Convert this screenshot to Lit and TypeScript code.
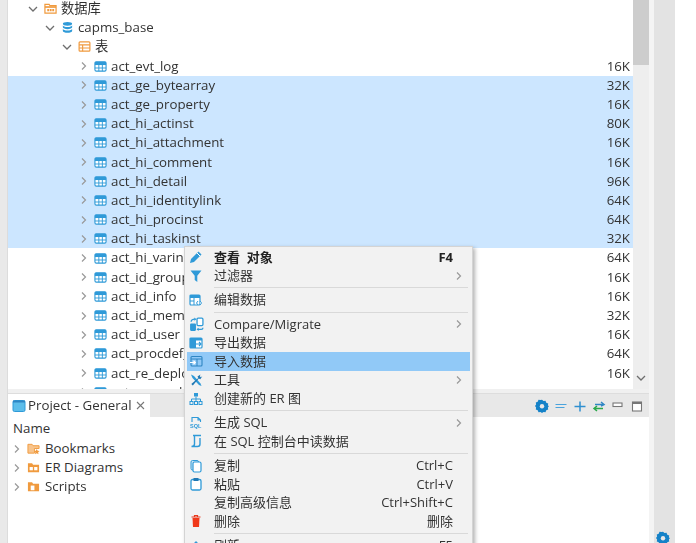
import { LitElement, html, css, svg } from "lit";
import { customElement } from "lit/decorators.js";

const B = "#2f9ad8";
const O = "#f09a3e";
const wrap = (c: unknown, size = 13) => html`<svg class="ic" width=${size} height=${size} viewBox="0 0 14 14" fill="none">${c}</svg>`;
const chevR = html`<svg class="chev" width="8" height="10" viewBox="0 0 8 10" fill="none"><path d="M2 1.500l3.500 3.500-3.500 3.500" stroke="#999" stroke-width="1.200"/></svg>`;
const chevD = html`<svg class="chev" width="10" height="8" viewBox="0 0 10 8" fill="none"><path d="M1 2l4 4 4-4" stroke="#6e6e6e" stroke-width="1.300"/></svg>`;
const closeX = html`<svg class="close" width="9" height="9" viewBox="0 0 9 9" fill="none"><path d="M1 1l7 7M8 1L1 8" stroke="#777" stroke-width="1.100"/></svg>`;

const icons: Record<string, unknown> = {
  table: wrap(svg`<rect x="1" y="2" width="12" height="10" rx="1.500" fill="#fff" stroke="${B}" stroke-width="1.200"/><rect x="1" y="2" width="12" height="3.400" fill="${B}"/><path d="M1 8.600h12M5.200 5v7M9 5v7" stroke="${B}"/>`),
  dbfolder: wrap(svg`<path d="M1 2.500h4.500l1 1.500H13v8H1z" fill="#fff" stroke="${O}" stroke-width="1.300"/><path d="M1 4.500h12v1.800H1z" fill="${O}"/><path d="M3.500 7.500h2v2.500h-2zM6.200 7.500h2v2.500h-2zM8.900 7.500h2v2.500h-2z" fill="${O}"/>`),
  db: wrap(svg`<ellipse cx="7" cy="3" rx="5" ry="2" fill="${B}"/><path d="M2 4.600c0 2.600 10 2.600 10 0v2.200c0 2.600-10 2.600-10 0zM2 8.400c0 2.600 10 2.600 10 0v2.400c0 2.600-10 2.600-10 0z" fill="${B}"/>`),
  tables: wrap(svg`<rect x="1.200" y="2" width="11.600" height="10" rx="1" fill="#fff" stroke="${O}" stroke-width="1.300"/><path d="M1.200 5.200h11.600M1.200 8.600h11.600M5 5v7" stroke="${O}" stroke-width="1.200"/>`),
  pencil: wrap(svg`<path d="M9.500 1.500l3 3-7.500 7.500-4 1 1-4z" fill="${B}"/><path d="M8 3l3 3" stroke="#fff"/>`, 14),
  filter: wrap(svg`<path d="M1.500 1.500h11L8.300 6.800V13L5.700 11V6.800z" fill="${B}"/>`, 14),
  edit: wrap(svg`<rect x="1" y="2" width="10" height="10" rx="1" fill="#fff" stroke="${B}" stroke-width="1.200"/><rect x="1" y="2" width="10" height="3" fill="${B}"/><path d="M1 8h4M5 5v7" stroke="${B}"/><path d="M9 8l-1.500 2L9 12M11 8l1.500 2L11 12" stroke="${B}" fill="#fff"/>`, 14),
  compare: wrap(svg`<rect x="7.500" y="1" width="5.500" height="7" rx="1" fill="#fff" stroke="${B}" stroke-width="1.200"/><rect x="1" y="6" width="5.500" height="7" rx="1" fill="${B}"/><path d="M2 4.500C2 2.600 3.500 2 5.500 2M8 11.500h3.500c1 0 1.500-.7 1.500-1.500" stroke="${B}" stroke-width="1.200"/><path d="M5 .5l2 1.500-2 1.500zM9 10l-2 1.500 2 1.500z" fill="${B}"/>`, 15),
  exportI: wrap(svg`<rect x="1" y="2" width="12" height="10" rx="1" fill="#fff" stroke="${B}" stroke-width="1.200"/><rect x="1" y="2" width="6" height="10" fill="${B}"/><rect x="1" y="2" width="12" height="2.500" fill="${B}"/><path d="M7 8h5M10 6l2 2-2 2" stroke="${B}" stroke-width="1.100"/>`, 14),
  importI: wrap(svg`<rect x="2" y="2.500" width="11" height="9.500" rx="1" fill="none" stroke="#2f86c4" stroke-width="1.100"/><path d="M2 5h11M8 5v7" stroke="#2f86c4"/><path d="M1 8.500h5M4.500 6.800l1.800 1.700-1.800 1.700" stroke="#fff" stroke-width="1.200"/>`, 14),
  tools: wrap(svg`<path d="M2 1.500l3 1.500 6.500 7.500 1 2.500-2.500-1L3.500 5z" fill="${B}"/><path d="M11.500 1.500L8.500 3.500l.8 1.500-7 6 1.500 1.500 6-7 1.500.8 2-3-1.500 1-1-1z" fill="#1f78b4"/>`, 14),
  er: wrap(svg`<rect x="5" y="1" width="4" height="3.500" fill="${B}"/><path d="M7 4.500V7M2.500 9V7h9v2M7 7v2" stroke="${B}"/><rect x="1" y="9.500" width="3" height="3" stroke="${B}"/><rect x="5.500" y="9.500" width="3" height="3" stroke="${B}"/><rect x="10" y="9.500" width="3" height="3" stroke="${B}"/>`, 14),
  sql: wrap(svg`<path d="M3 6V1.500h6L11.500 4v2M9 1.500V4h2.500" stroke="${B}" stroke-width="1.100"/><text x="1" y="12" font-size="5.500" font-weight="700" font-family="Liberation Sans" fill="${B}">SQL</text>`, 14),
  console: wrap(svg`<path d="M4 1.500h8M5.500 1.500v8.500c0 1.500-1 2.500-3 2.500h6c1.500 0 2.500-1 2.500-2.500V4" stroke="${B}" stroke-width="1.400"/>`, 14),
  copy: wrap(svg`<rect x="2" y="1.500" width="7.500" height="9.500" rx="1.500" fill="#cfe6f5" stroke="${B}"/><rect x="4" y="3" width="8" height="10" rx="1.500" fill="#fff" stroke="${B}" stroke-width="1.200"/>`, 14),
  paste: wrap(svg`<rect x="2" y="2.500" width="10" height="10.500" rx="1.500" fill="#fff" stroke="${B}" stroke-width="1.300"/><rect x="4.500" y="1" width="5" height="3" fill="#1f78b4"/>`, 14),
  trash: wrap(svg`<path d="M2.500 3h9M5.500 3V1.500h3V3" stroke="#e8391d" stroke-width="1.200"/><path d="M3.500 4h7L10 13H4z" fill="#f0391a"/>`, 14),
  refresh: wrap(svg`<path d="M7 3L2 8v5h10V8z" fill="none" stroke="${B}" stroke-width="1.300"/>`, 14),
  star: wrap(svg`<path d="M1 2.500h4.500l1 1.500H13v3H8v5H1z" fill="#f8c48c" stroke="${O}"/><path d="M10.500 7.500l1 2 2 .2-1.500 1.400.4 2-1.900-1-1.900 1 .4-2-1.500-1.400 2-.2z" fill="${O}"/>`),
  erf: wrap(svg`<path d="M1 2.500h4.500l1 1.500H13v8H1z" fill="${O}"/><rect x="2.800" y="6.500" width="3.500" height="3.500" fill="#fff"/><rect x="7.700" y="6.500" width="3.500" height="3.500" fill="#fff"/>`),
  scriptf: wrap(svg`<path d="M1 2.500h4.500l1 1.500H13v8H1z" fill="${O}"/><rect x="4" y="6" width="4" height="5" fill="#fff"/>`),
  gear: wrap(svg`<path d="M7 .8l1.500 1.300 2-.3.8 1.900 1.900.8-.3 2L14 7l-1.100 1.500.3 2-1.900.8-.8 1.900-2-.3L7 14l-1.500-1.100-2 .3-.8-1.900-1.900-.8.3-2L0 7l1.100-1.500-.3-2 1.900-.8.8-1.900 2 .3z" fill="#1582c8"/><circle cx="7" cy="7.200" r="2.200" fill="#e8e8e8"/>`, 14),
  minus: wrap(svg`<path d="M1.500 5.500h11M1.500 8.500h9" stroke="#4aa3dc" stroke-width="1.200"/>`, 14),
  plus: wrap(svg`<path d="M1.500 7.500h11M7 2.500v10" stroke="#2f8fd0" stroke-width="1.500"/>`, 14),
  sync: wrap(svg`<path d="M3 5.500h8M9 3l3 2.500L9 7" stroke="#2f86c4" stroke-width="1.500"/><path d="M11 9.500H3M5 7l-3 2.500L5 12" stroke="#2aa84a" stroke-width="1.500"/>`, 14),
  min: wrap(svg`<rect x="2" y="4" width="9" height="3.500" fill="#fff" stroke="#777" stroke-width="1.100"/>`, 14),
  max: wrap(svg`<rect x="2.500" y="3" width="9" height="9" fill="#fff" stroke="#777" stroke-width="1.100"/><rect x="2.500" y="3" width="9" height="2" fill="#777"/>`, 14),
  panel: wrap(svg`<rect x="1" y="1.500" width="12" height="11" rx="1.500" fill="#5cbdea" stroke="#2f9ad8"/><rect x="1" y="1.500" width="12" height="2" fill="#2f86c4"/>`, 14),
};

const rows: [string, string, boolean][] = [
  ["act_evt_log", "16K", false],
  ["act_ge_bytearray", "32K", true],
  ["act_ge_property", "16K", true],
  ["act_hi_actinst", "80K", true],
  ["act_hi_attachment", "16K", true],
  ["act_hi_comment", "16K", true],
  ["act_hi_detail", "96K", true],
  ["act_hi_identitylink", "64K", true],
  ["act_hi_procinst", "64K", true],
  ["act_hi_taskinst", "32K", true],
  ["act_hi_varinst", "64K", false],
  ["act_id_group", "16K", false],
  ["act_id_info", "16K", false],
  ["act_id_membership", "32K", false],
  ["act_id_user", "16K", false],
  ["act_procdef_info", "64K", false],
  ["act_re_deployment", "16K", false],
  ["act_re_model", "", false],
];

type MI = { i?: string; t?: string; k?: string; sub?: boolean; bold?: boolean; hl?: boolean; sep?: boolean };
const menu: MI[] = [
  { i: "pencil", t: "查看  对象", k: "F4", bold: true },
  { i: "filter", t: "过滤器", sub: true },
  { sep: true },
  { i: "edit", t: "编辑数据" },
  { sep: true },
  { i: "compare", t: "Compare/Migrate", sub: true },
  { i: "exportI", t: "导出数据" },
  { i: "importI", t: "导入数据", hl: true },
  { i: "tools", t: "工具", sub: true },
  { i: "er", t: "创建新的 ER 图" },
  { sep: true },
  { i: "sql", t: "生成 SQL", sub: true },
  { i: "console", t: "在 SQL 控制台中读数据" },
  { sep: true },
  { i: "copy", t: "复制", k: "Ctrl+C" },
  { i: "paste", t: "粘贴", k: "Ctrl+V" },
  { t: "复制高级信息", k: "Ctrl+Shift+C" },
  { i: "trash", t: "删除", k: "删除" },
  { sep: true },
  { i: "refresh", t: "刷新", k: "F5" },
];

@customElement("app-root")
export class AppRoot extends LitElement {
  static styles = css`
    :host {
      display: block;
      width: 696px;
      height: 543px;
      overflow: hidden;
      position: relative;
      background: #fff;
      color: #333;
      font: 13.3px/19.2px "Open Sans", "Noto Sans CJK SC", sans-serif;
    }
    .page { display: flex; height: 543px; filter: blur(0.35px); }
    .left-edge { width: 7px; background: #e9e9e9; border-right: 1px solid #dcdcdc; }
    .main { width: 641px; display: flex; flex-direction: column; }
    .top { height: 389px; display: flex; overflow: hidden; }
    .tree { width: 625px; flex: none; margin-top: -1px; }
    .scroll { width: 16px; background: #eeeeee; display: flex; flex-direction: column; }
    .thumb { height: 65px; background: #cdcdcd; }
    .scroll-rest { flex: 1; display: flex; align-items: flex-end; justify-content: center; padding-bottom: 7px; }
    .scroll-rest .chev { margin: 0; }
    .row { height: 19.2px; display: flex; align-items: center; white-space: nowrap; }
    .row.sel { background: #cce6ff; }
    .row .size { margin-left: auto; padding-right: 3px; }
    .chev { flex: none; margin-right: 6px; }
    .ic { flex: none; margin-right: 4px; }
    .l1 { padding-left: 20px; }
    .l2 { padding-left: 37px; }
    .l3 { padding-left: 54px; }
    .l4 { padding-left: 72px; }
    .bottom { flex: 1; display: flex; flex-direction: column; }
    .gap { height: 4px; background: #f0f0f0; }
    .tabbar { height: 24px; background: #e8e8e8; display: flex; align-items: stretch; border-top: 1px solid #dddddd; box-sizing: border-box; }
    .tab { width: 142px; background: #fff; display: flex; align-items: center; padding: 0 5px 0 4px; box-sizing: border-box; white-space: nowrap; }
    .tab .ic { margin-right: 2px; }
    .close { margin-left: auto; }
    .tools { margin-left: auto; display: flex; align-items: center; gap: 5px; padding-right: 5px; }
    .tools .ic { margin-right: 0; }
    .panel { flex: 1; background: #fff; padding: 2px 0 0 5px; }
    .name { height: 20px; }
    .prow { height: 19.2px; display: flex; align-items: center; white-space: nowrap; }
    .prow .ic { margin-right: 5px; }
    .gutter { width: 5px; background: #f4f4f4; }
    .right { width: 21px; background: #e3e3e3; position: relative; }
    .gear-corner { position: absolute; left: 2px; top: 531px; }
    .menu {
      position: absolute;
      left: 184px;
      top: 246px;
      width: 289px;
      padding: 1px 2px 0;
      box-sizing: border-box;
      background: #f2f2f2;
      border: 1px solid #d4d4d4;
      box-shadow: 2px 2px 4px rgba(0, 0, 0, 0.3);
      color: #333;
      font-size: 13px;
      filter: blur(0.35px);
    }
    .mi { height: 18.6px; display: flex; align-items: center; white-space: pre; padding-left: 2px; }
    .mi.hl { background: #91c9f7; }
    .mi.bold { font-weight: 700; color: #222; }
    .mi .slot { width: 25px; flex: none; display: flex; align-items: center; }
    .mi .key { margin-left: auto; padding-right: 17px; }
    .mi .subm { margin-left: auto; padding-right: 7px; display: flex; }
    .mi .subm .chev { margin: 0; }
    .msep { height: 5.6px; display: flex; align-items: center; padding-left: 27px; }
    .msep i { display: block; height: 1px; flex: 1; background: #d9d9d9; margin-right: 2px; }
  `;

  private treeRow(cls: string, chev: unknown, icon: string, text: string) {
    return html`<div class="row ${cls}">${chev}${icons[icon]}<span>${text}</span></div>`;
  }

  render() {
    return html`
      <div class="page">
        <div class="left-edge"></div>
        <div class="main">
          <div class="top">
            <div class="tree">
              ${this.treeRow("l1", chevD, "dbfolder", "数据库")}
              ${this.treeRow("l2", chevD, "db", "capms_base")}
              ${this.treeRow("l3", chevD, "tables", "表")}
              ${rows.map(
                ([n, s, sel]) => html`<div class="row l4 ${sel ? "sel" : ""}">${chevR}${icons.table}<span>${n}</span><span class="size">${s}</span></div>`
              )}
            </div>
            <div class="scroll">
              <div class="thumb"></div>
              <div class="scroll-rest">${chevD}</div>
            </div>
          </div>
          <div class="bottom">
            <div class="gap"></div>
            <div class="tabbar">
              <div class="tab">${icons.panel}<span>Project - General</span>${closeX}</div>
              <div class="tools">${icons.gear}${icons.minus}${icons.plus}${icons.sync}${icons.min}${icons.max}</div>
            </div>
            <div class="panel">
              <div class="name">Name</div>
              <div class="prow">${chevR}${icons.star}<span>Bookmarks</span></div>
              <div class="prow">${chevR}${icons.erf}<span>ER Diagrams</span></div>
              <div class="prow">${chevR}${icons.scriptf}<span>Scripts</span></div>
            </div>
          </div>
        </div>
        <div class="gutter"></div>
        <div class="right"><span class="gear-corner">${icons.gear}</span></div>
      </div>
      <div class="menu">
        ${menu.map((m) =>
          m.sep
            ? html`<div class="msep"><i></i></div>`
            : html`<div class="mi ${m.hl ? "hl" : ""} ${m.bold ? "bold" : ""}">
                <span class="slot">${m.i ? icons[m.i] : ""}</span><span>${m.t}</span>
                ${m.k ? html`<span class="key">${m.k}</span>` : ""}
                ${m.sub ? html`<span class="subm">${chevR}</span>` : ""}
              </div>`
        )}
      </div>
    `;
  }
}
